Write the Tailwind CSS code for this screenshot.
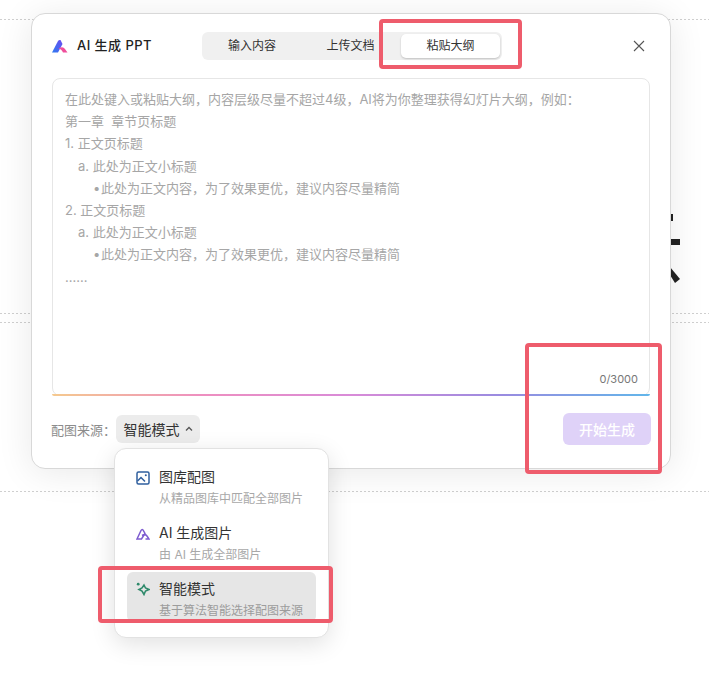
<!DOCTYPE html>
<html>
<head>
<meta charset="utf-8">
<script src="https://cdn.jsdelivr.net/npm/@tailwindcss/browser@4"></script>
</head>
<body class="bg-white">
<div class="relative w-[709px] h-[674px] overflow-hidden bg-white font-['Inter','Noto_Sans_CJK_SC',sans-serif]">
  <!-- page behind the dialog -->
  <div class="absolute left-0 right-0 top-[19px] h-px bg-[repeating-linear-gradient(90deg,#cfcfcf_0_2px,transparent_2px_4px)]"></div>
  <div class="absolute left-0 right-0 top-[313px] h-px bg-[repeating-linear-gradient(90deg,#cfcfcf_0_2px,transparent_2px_4px)]"></div>
  <div class="absolute left-0 right-0 top-[322px] h-px bg-[repeating-linear-gradient(90deg,#cfcfcf_0_2px,transparent_2px_4px)]"></div>
  <div class="absolute left-0 right-0 top-[491px] h-px bg-[repeating-linear-gradient(90deg,#cfcfcf_0_2px,transparent_2px_4px)]"></div>
  <svg class="absolute left-[665px] top-[205px]" width="24" height="85" viewBox="0 0 24 85" fill="#222"><rect x="5" y="9" width="3" height="7"/><rect x="5" y="34" width="10" height="6"/><path d="M5 62 L15 74 L10 78 L5 70Z"/></svg>

  <!-- dialog -->
  <div class="absolute left-[31px] top-[13px] w-[640px] h-[456px] flex flex-col rounded-[14px] border border-[#d8d8d8] bg-white shadow-[0_4px_36px_rgba(0,0,0,0.09)] px-[20px]">
    <div class="flex h-[64px] items-center">
      <svg width="17" height="15" viewBox="0 0 17 14" class="mr-[8px]">
        <defs>
          <linearGradient id="lg" x1="0" y1="1" x2="1" y2="0"><stop offset="0" stop-color="#2f7bf0"/><stop offset="1" stop-color="#6a4cf0"/></linearGradient>
        </defs>
        <path d="M0 13 L6 1.5 Q7 0 8.5 0.5 L10.5 4.5 L6 13Z" fill="url(#lg)"/>
        <path d="M6.5 9 Q11 6.5 13 9.5 L15.5 13 L11 13 Q9.5 9.5 6.5 9Z" fill="#ef4f9b"/>
      </svg>
      <span class="w-[125px] text-[13px] font-medium tracking-[0.45px] text-[#222]">AI 生成 PPT</span>
      <div class="flex h-[28px] w-[300px] items-center rounded-[6px] bg-[#f0f0f0] text-[12px] text-[#333]">
        <div class="flex h-full w-[100px] items-center justify-center">输入内容</div>
        <div class="flex h-full w-[97px] items-center justify-center">上传文档</div>
        <div class="ml-[2px] flex h-[24px] w-[99px] items-center justify-center rounded-[5px] bg-white shadow-[0_1px_2px_rgba(0,0,0,0.2)]">粘贴大纲</div>
      </div>
      <svg class="ml-auto mr-[5px]" width="12" height="12" viewBox="0 0 12 12" fill="none" stroke="#555" stroke-width="1.1"><path d="M1 1L11 11M11 1L1 11"/></svg>
    </div>

    <div class="relative h-[318px] rounded-[8px] border border-[#e6e6e6] bg-white px-[12px] pt-[9px] text-[13px] leading-[22.2px] text-[#a6a6a6]">
      <div>在此处键入或粘贴大纲，内容层级尽量不超过4级，AI将为你整理获得幻灯片大纲，例如：</div>
      <div>第一章&nbsp; 章节页标题</div>
      <div>1. 正文页标题</div>
      <div class="pl-[13px]">a. 此处为正文小标题</div>
      <div class="pl-[28px]"><span class="inline-block w-[8px]">•</span>此处为正文内容，为了效果更优，建议内容尽量精简</div>
      <div>2. 正文页标题</div>
      <div class="pl-[13px]">a. 此处为正文小标题</div>
      <div class="pl-[28px]"><span class="inline-block w-[8px]">•</span>此处为正文内容，为了效果更优，建议内容尽量精简</div>
      <div>......</div>
      <div class="absolute bottom-[9px] right-[11px] text-[11px] leading-[14px] text-[#777]">0/3000</div>
      <div class="absolute bottom-[-1px] left-[-1px] right-[-1px] h-[2px] rounded-b-[8px] bg-[linear-gradient(90deg,#f5c98e_0%,#ee8fc0_25%,#d98bd8_50%,#9a8be0_75%,#62b6ea_100%)]"></div>
    </div>

    <div class="flex flex-1 items-start pt-[19px]">
      <span class="ml-[-1px] mt-[7px] w-[65px] text-[13px] leading-[16px] text-[#8c8c8c]">配图来源：</span>
      <div class="flex h-[28px] w-[84px] items-center justify-center gap-[5px] rounded-[6px] bg-[#ececec] text-[14px] text-[#333]">
        智能模式
        <svg width="8" height="6" viewBox="0 0 8 6" fill="none" stroke="#555" stroke-width="1.3"><path d="M1 4.5L4 1.5L7 4.5"/></svg>
      </div>
      <div class="ml-auto mr-[-1px] mt-[-2px] flex h-[32px] w-[88px] items-center justify-center rounded-[6px] bg-[#dfd2f8] text-[14px] font-medium text-white">开始生成</div>
    </div>
  </div>

  <!-- dropdown -->
  <div class="absolute left-[114px] top-[448px] flex h-[190px] w-[215px] flex-col rounded-[12px] border border-[#e2e2e2] bg-white px-[12px] pt-[11px] shadow-[0_6px_24px_rgba(0,0,0,0.12)]">
    <div class="flex h-[56px] px-[9px] pt-[8px]">
      <svg class="mr-[9px] mt-[3px] shrink-0" width="14" height="14" viewBox="0 0 14 14" fill="none" stroke="#2f5f9e" stroke-width="1.5"><rect x="1" y="1" width="12" height="12" rx="1.5"/><path d="M1.5 10L5 6.5L9 10.5"/><circle cx="9.8" cy="4.2" r="1" fill="#2f5f9e" stroke="none"/></svg>
      <div>
        <div class="text-[14px] leading-[18px] text-[#333]">图库配图</div>
        <div class="mt-[5px] text-[12px] leading-[15px] text-[#a8a8a8]">从精品图库中匹配全部图片</div>
      </div>
    </div>
    <div class="flex h-[56px] px-[9px] pt-[8px]">
      <svg class="mr-[9px] mt-[3px] shrink-0" width="14" height="14" viewBox="0 0 14 14" fill="none" stroke="#7d5bd0" stroke-width="1.5"><path d="M1 12L5 3.5Q5.8 2 7 3L9 6.5L5.5 12Z"/><path d="M6 8.5Q9.5 6.5 11 9L13 12H9.5"/></svg>
      <div>
        <div class="text-[14px] leading-[18px] text-[#333]">AI 生成图片</div>
        <div class="mt-[5px] text-[12px] leading-[15px] text-[#a8a8a8]">由 AI 生成全部图片</div>
      </div>
    </div>
    <div class="flex h-[50px] rounded-[6px] bg-[#e6e6e6] px-[9px] pt-[8px]">
      <svg class="mr-[9px] mt-[2px] shrink-0" width="14" height="14" viewBox="0 0 14 14" fill="none" stroke="#2f8a6b" stroke-width="1.6"><path d="M8 3L9.5 6L13 7.5L9.5 9L8 12.5L6 9L3 7.5L6 6Z"/><circle cx="2.2" cy="2.2" r="1.4" fill="#2f8a6b" stroke="none"/></svg>
      <div>
        <div class="text-[14px] leading-[18px] text-[#333]">智能模式</div>
        <div class="mt-[5px] text-[12px] leading-[15px] text-[#9c9c9c]">基于算法智能选择配图来源</div>
      </div>
    </div>
  </div>

  <!-- annotation boxes -->
  <div class="absolute left-[379px] top-[19px] h-[50px] w-[143px] rounded-[4px] border-[4px] border-[#ee5c6c]"></div>
  <div class="absolute left-[525px] top-[343px] h-[131px] w-[137px] rounded-[4px] border-[4px] border-[#ee5c6c]"></div>
  <div class="absolute left-[98px] top-[566px] h-[57px] w-[235px] rounded-[4px] border-[4px] border-[#ee5c6c]"></div>
</div>
</body>
</html>
